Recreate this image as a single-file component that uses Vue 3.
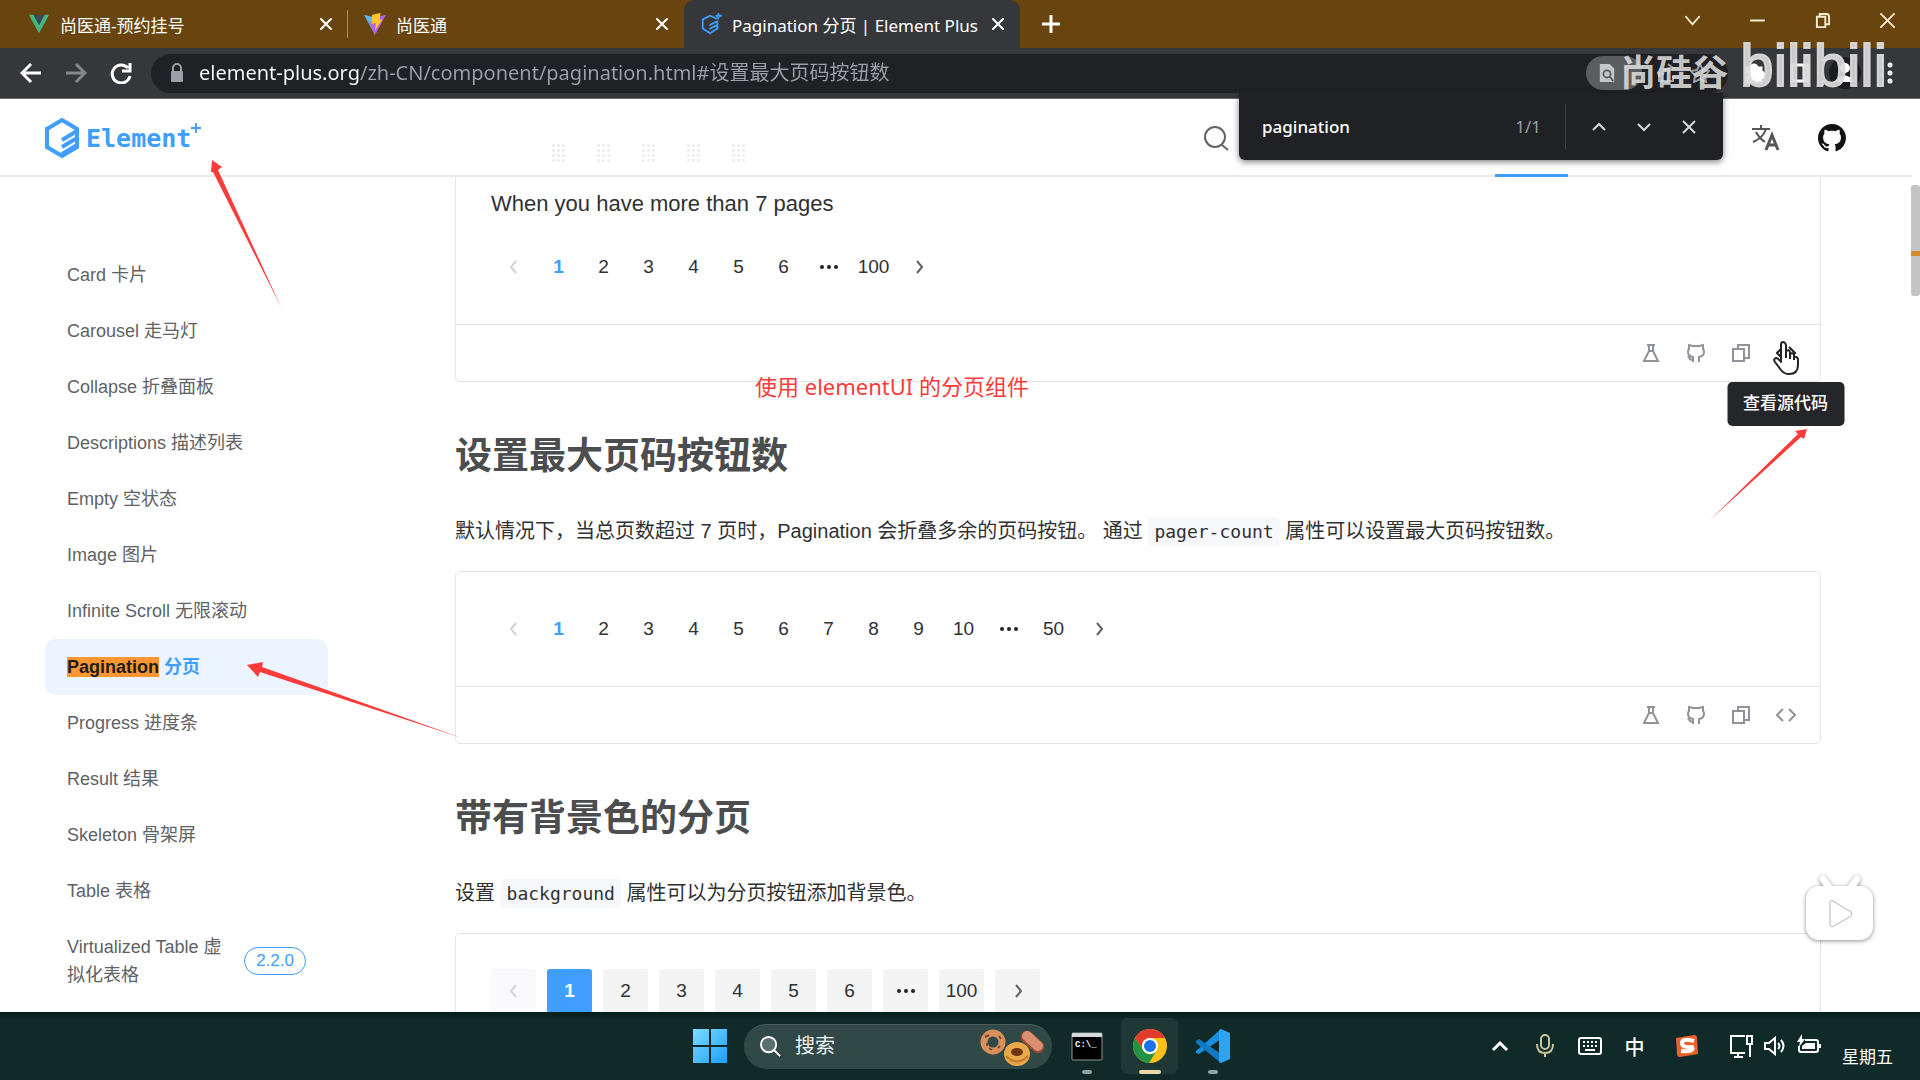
<template>
  <div class="desktop">
    <!-- 标签栏 -->
    <div class="tab-strip">
      <div v-for="tab in tabs" :key="tab.title" class="tab" :class="{ active: tab.active }">
        <svg v-if="tab.icon === 'vue'" class="tab-icon" viewBox="0 0 24 24">
          <path d="M1 2h5l6 11 6-11h5L12 22z" fill="#41b883" />
          <path d="M6 2h4l2 4 2-4h4l-6 11z" fill="#35495e" />
        </svg>
        <svg v-else-if="tab.icon === 'vite'" class="tab-icon" viewBox="0 0 24 24">
          <path d="M0 2l12 3v19z" fill="#5cb8f5" />
          <path d="M24 2L12 5 6 11l6 13z" fill="#b264e8" />
          <path d="M9 2l9-2-1 7h3l-8 12 1-8-5 1z" fill="#ffc628" />
        </svg>
        <svg v-else class="tab-icon" viewBox="0 0 24 24" fill="none" stroke="#409eff" stroke-width="2">
          <path d="M18 6l-7-3-8 4v10l8 5 8-5v-6M11 13l8-4M11 17l8-4M20 1v5M18 3h5" />
        </svg>
        <span class="tab-title">{{ tab.title }}</span>
        <button class="tab-close" aria-label="关闭标签页">
          <svg viewBox="0 0 16 16"><path d="M3 3l10 10M13 3L3 13" /></svg>
        </button>
      </div>
      <button class="new-tab" aria-label="新标签页">
        <svg viewBox="0 0 18 18"><path d="M9 1v16M1 9h16" /></svg>
      </button>
      <div class="window-controls">
        <button aria-label="搜索标签页"><svg viewBox="0 0 16 16"><path d="M1 4l7 8 7-8" /></svg></button>
        <button aria-label="最小化"><svg viewBox="0 0 16 16"><path d="M1 8h14" /></svg></button>
        <button aria-label="还原"><svg viewBox="0 0 16 16"><path d="M2 4h9v11H2zM5 4V1h7q3 0 3 3v8h-4" /></svg></button>
        <button aria-label="关闭"><svg viewBox="0 0 16 16"><path d="M1 1l14 14M15 1L1 15" /></svg></button>
      </div>
    </div>

    <!-- 地址栏 -->
    <div class="toolbar">
      <button class="tool" aria-label="后退">
        <svg viewBox="0 0 22 22"><path d="M21 11H2M11 2l-9 9 9 9" /></svg>
      </button>
      <button class="tool dim" aria-label="前进">
        <svg viewBox="0 0 22 22"><path d="M1 11h19M11 2l9 9-9 9" /></svg>
      </button>
      <button class="tool" aria-label="重新加载">
        <svg viewBox="0 0 22 22"><path d="M18 6a9 9 0 1 0 2 8M20 1v8h-8" /></svg>
      </button>
      <div class="address">
        <svg class="lock" viewBox="0 0 16 20">
          <rect x="2" y="8" width="12" height="11" rx="1" fill="#9aa0a6" />
          <path d="M4 8V5a4 4 0 0 1 8 0v3" fill="none" stroke="#9aa0a6" stroke-width="2" />
        </svg>
        <input class="url" type="text" aria-label="地址" value="element-plus.org/zh-CN/component/pagination.html#设置最大页码按钮数" />
        <span class="find-chip">
          <svg viewBox="0 0 20 22">
            <path d="M2 1h11l5 5v15H2z" fill="#c4c7c9" />
            <circle cx="10" cy="12" r="4" fill="none" stroke="#5b5d5f" stroke-width="2" />
            <path d="M13 15l4 5" stroke="#5b5d5f" stroke-width="2" />
          </svg>
        </span>
        <svg class="address-icon" viewBox="0 0 20 20"><path d="M3 9v9h14v-5M7 12q0-7 8-7M12 1l5 4-5 4" /></svg>
        <svg class="address-icon" viewBox="0 0 20 20"><path d="M10 1l3 6 6 1-4 5 1 6-6-3-6 3 1-6-4-5 6-1z" /></svg>
      </div>
      <button class="tool" aria-label="扩展程序">
        <svg viewBox="0 0 22 22"><path d="M3 6h4a3 3 0 0 1 6 0h4v4a3 3 0 0 1 0 6v4h-5a2 2 0 0 0-5 0H3v-5a2 2 0 0 0 0-5z" fill="#fff" /></svg>
      </button>
      <button class="tool" aria-label="侧边栏">
        <svg viewBox="0 0 22 22"><path d="M3 3h16v16H3zM15 3v16" /></svg>
      </button>
      <button class="tool avatar" aria-label="用户">
        <svg viewBox="0 0 32 32">
          <circle cx="16" cy="16" r="16" fill="#1b1c1f" stroke="none" />
          <circle cx="16" cy="11" r="5" fill="#fff" stroke="none" />
          <path d="M6 25q10-13 20 0z" fill="#fff" stroke="none" />
        </svg>
      </button>
      <button class="tool" aria-label="菜单">
        <svg viewBox="0 0 22 22" fill="#fff"><circle cx="11" cy="3" r="1" /><circle cx="11" cy="11" r="1" /><circle cx="11" cy="19" r="1" /></svg>
      </button>
    </div>

    <div class="page">
      <header class="site-header">
        <a class="logo" href="#" aria-label="Element Plus">
          <svg class="logo-mark" viewBox="0 0 36 40" fill="none" stroke="#409eff">
            <path d="M18 2l15 9v18l-15 9-15-9V11z" stroke-width="4" />
            <path d="M18 22l15-9M18 29l15-9M18 36l15-9" stroke-width="4" />
          </svg>
          <span>Element</span>
          <svg class="logo-plus" viewBox="0 0 10 10"><path d="M5 0v10M0 5h10" stroke="#409eff" stroke-width="2" /></svg>
        </a>
        <div class="faded-dots">
          <i v-for="n in 5" :key="n"></i>
        </div>
        <div class="header-tools">
          <button class="header-search" aria-label="搜索">
            <svg viewBox="0 0 26 26" fill="none" stroke="#606266" stroke-width="2"><circle cx="12" cy="12" r="10" /><path d="M19 20l6 5" /></svg>
          </button>
          <a class="current-link" href="#" aria-label="组件"></a>
          <button class="header-icon" aria-label="语言">
            <svg viewBox="0 0 28 28" fill="none" stroke="#555" stroke-width="2">
              <path d="M0 5h18M9 1v4M14 5Q11 14 1 18M4 8q3 6 9 10" />
              <path d="M14 26l6-15 6 15M16 21h8" stroke-width="3" />
            </svg>
          </button>
          <a class="header-icon" href="#" aria-label="GitHub">
            <svg viewBox="0 0 16 16" fill="#111">
              <path d="M8 0C3.58 0 0 3.58 0 8c0 3.54 2.29 6.53 5.47 7.59.4.07.55-.17.55-.38 0-.19-.01-.82-.01-1.49-2.01.37-2.53-.49-2.69-.94-.09-.23-.48-.94-.82-1.13-.28-.15-.68-.52-.01-.53.63-.01 1.08.58 1.23.82.72 1.21 1.87.87 2.33.66.07-.52.28-.87.51-1.07-1.78-.2-3.64-.89-3.64-3.95 0-.87.31-1.59.82-2.15-.08-.2-.36-1.02.08-2.12 0 0 .67-.21 2.2.82.64-.18 1.32-.27 2-.27s1.36.09 2 .27c1.53-1.04 2.2-.82 2.2-.82.44 1.1.16 1.92.08 2.12.51.56.82 1.27.82 2.15 0 3.07-1.87 3.75-3.65 3.95.29.25.54.73.54 1.48 0 1.07-.01 1.93-.01 2.2 0 .21.15.46.55.38A8.01 8.01 0 0 0 16 8c0-4.42-3.58-8-8-8z" />
            </svg>
          </a>
        </div>
      </header>

      <div class="page-body">
        <nav class="sidebar">
          <a v-for="item in menu" :key="item.en" href="#" class="menu-item" :class="{ active: item.active }">
            <span v-if="item.active" class="menu-text"><mark>{{ item.en }}</mark> {{ item.zh }}</span>
            <span v-else class="menu-text">{{ `${item.en} ${item.zh}` }}</span>
            <span v-if="item.version" class="version">{{ item.version }}</span>
          </a>
        </nav>

        <main class="content">
          <section v-for="demo in demos" :key="demo.id">
            <h2 v-if="demo.title">{{ demo.title }}</h2>
            <p v-if="demo.title" class="intro">
              {{ demo.before }} <code>{{ demo.code }}</code> {{ demo.after }}
            </p>
            <div class="example" :class="{ continued: !demo.title }">
              <div class="example-showcase">
                <div v-if="demo.caption" class="caption">{{ demo.caption }}</div>
                <div class="pagination" :class="{ background: demo.background }">
                  <button class="pager disabled" disabled aria-label="上一页">
                    <svg viewBox="0 0 14 14"><path d="M9 1L4 7l5 6" /></svg>
                  </button>
                  <button v-for="p in demo.pages" :key="p" class="pager" :class="{ current: p === 1 }" :aria-label="p === '…' ? '更多' : undefined">
                    <svg v-if="p === '…'" class="more" viewBox="0 0 20 6">
                      <circle cx="3" cy="3" r="2" /><circle cx="10" cy="3" r="2" /><circle cx="17" cy="3" r="2" />
                    </svg>
                    <template v-else>{{ p }}</template>
                  </button>
                  <button class="pager" aria-label="下一页">
                    <svg viewBox="0 0 14 14"><path d="M5 1l5 6-5 6" /></svg>
                  </button>
                </div>
              </div>
              <div class="op-btns">
                <button aria-label="在 Playground 中编辑">
                  <svg viewBox="0 0 20 20"><path d="M6 2h8M8 2v6L3 18h14L12 8V2M8 8h4" /></svg>
                </button>
                <button aria-label="在 Github 中编辑">
                  <svg viewBox="0 0 20 20"><path d="M7 19v-5q-5-1-5-5 0-2 1-3V2l4 1h6l4-1v4q1 1 1 3 0 4-5 5v5M7 17q-3 0-5-4" /></svg>
                </button>
                <button aria-label="复制代码">
                  <svg viewBox="0 0 20 20"><path d="M2 6h11v12H2zM7 6V2h11v13h-5" /></svg>
                </button>
                <button class="source" :class="{ hovered: demo.hovered }" aria-label="查看源代码">
                  <svg viewBox="0 0 20 20"><path d="M7 4l-6 6 6 6M13 4l6 6-6 6" /></svg>
                  <template v-if="demo.hovered">
                    <svg class="hand" viewBox="0 0 26 34">
                      <path d="M8 20V4q0-3 2-3t3 3v9-3q3-2 4 1v2q3-2 4 1v2q3-1 4 2v6q0 9-9 9-5 0-8-4l-6-8q-2-3 1-4 2 0 5 4z" fill="#fff" stroke="#222" stroke-width="2" stroke-linejoin="round" />
                      <path d="M13 12v5M17 13v5M21 15v4" stroke="#222" stroke-width="2" />
                    </svg>
                    <span class="tooltip">查看源代码</span>
                  </template>
                </button>
              </div>
            </div>
          </section>
        </main>

        <div class="scrollbar"><div class="thumb"><i></i></div></div>
      </div>
    </div>

    <!-- 任务栏 -->
    <footer class="taskbar">
      <div></div>
      <div class="taskbar-center">
        <button class="app" aria-label="开始">
          <svg class="app-icon" viewBox="0 0 34 34">
            <defs>
              <linearGradient id="win" x1="0" y1="0" x2="1" y2="1">
                <stop offset="0" stop-color="#7fdcff" />
                <stop offset="1" stop-color="#1a9fff" />
              </linearGradient>
            </defs>
            <path d="M0 0h16v16H0zM18 0h16v16H18zM0 18h16v16H0zM18 18h16v16H18z" fill="url(#win)" />
          </svg>
        </button>
        <label class="task-search">
          <svg class="search-glass" viewBox="0 0 22 22" fill="#5b706e" stroke="#fff" stroke-width="2"><circle cx="9" cy="9" r="8" /><path d="M15 15l6 6" /></svg>
          <input type="text" placeholder="搜索" aria-label="搜索" />
          <svg class="donuts" viewBox="0 0 66 38">
            <circle cx="13" cy="14" r="9" fill="none" stroke="#d9905a" stroke-width="7" />
            <path d="M5 9l4-2M9 20l3 2M19 8l2 3M18 20l2-2M7 15l0 3" stroke="#7b4a3a" stroke-width="2" />
            <g stroke-linecap="round"><path d="M47 9l11 10" stroke="#8f4a33" stroke-width="13" /><path d="M47 8l11 10" stroke="#d98f70" stroke-width="10" /></g>
            <ellipse cx="37" cy="26" rx="13" ry="12" fill="#e9a94b" />
            <ellipse cx="37" cy="24" rx="6" ry="4" fill="#6e3410" />
            <path d="M26 28q11 11 22 0" fill="none" stroke="#c67a25" stroke-width="2" />
          </svg>
        </label>
        <button class="app running" aria-label="命令提示符">
          <svg class="app-icon" viewBox="0 0 34 34">
            <rect x="2" y="4" width="30" height="27" rx="1" fill="#000" stroke="#8d9594" stroke-width="1" />
            <path d="M2 4h30v4H2z" fill="#d5d9d9" />
            <text x="5" y="18" font-size="9" font-weight="700" fill="#fff" font-family="Liberation Mono, monospace">C:\_</text>
          </svg>
        </button>
        <button class="app running focused" aria-label="Chrome">
          <svg class="app-icon" viewBox="0 0 34 34">
            <circle cx="17" cy="17" r="17" fill="#fbc116" />
            <path d="M2 9A17 17 0 0 1 32 9H17a8 8 0 0 0-7 12z" fill="#e33b2e" />
            <path d="M2 9a17 17 0 0 0 14 25l8-13a8 8 0 0 1-14 0z" fill="#229342" />
            <circle cx="17" cy="17" r="8" fill="#fff" />
            <circle cx="17" cy="17" r="6" fill="#1a73e8" />
          </svg>
        </button>
        <button class="app running" aria-label="Visual Studio Code">
          <svg class="app-icon" viewBox="0 0 34 34">
            <path d="M0 22l25-22v10L3 25l-3-1z" fill="#1b8ee0" />
            <path d="M0 12l3-2 22 15v9L0 14z" fill="#1079c4" />
            <path d="M25 0l9 4v26l-9 4-2-1V1z" fill="#2ba4f4" />
          </svg>
        </button>
      </div>
      <div class="tray">
        <button class="tray-btn" aria-label="显示隐藏的图标"><svg viewBox="0 0 24 24"><path d="M5 16l7-7 7 7" stroke-width="3" /></svg></button>
        <button class="tray-btn mic" aria-label="麦克风"><svg viewBox="0 0 24 24"><rect x="8" y="1" width="8" height="14" rx="4" /><path d="M4 10q0 9 8 9t8-9M12 19v4" /></svg></button>
        <button class="tray-btn" aria-label="触摸键盘"><svg viewBox="0 0 24 24"><rect x="1" y="4" width="22" height="16" rx="2" /><path d="M5 8h14M5 12h14" stroke-dasharray="2 2" /><path d="M7 16h10" /></svg></button>
        <button class="tray-btn ime">中</button>
        <button class="tray-btn sogou" aria-label="搜狗输入法">
          <svg viewBox="0 0 24 24">
            <path d="M1 4l18-3q3 0 3 3l1 16-18 3q-3 0-3-3z" fill="#e8622c" stroke="none" />
            <path d="M19 7Q7 4 7 9t10 4q3 5-11 4" stroke-width="4" />
          </svg>
        </button>
        <button class="tray-status" aria-label="网络、音量和电池">
          <svg viewBox="0 0 24 24"><path d="M16 2H2v17h14M9 19v4M5 23h9M21 10v13M21 10h-3V2h5v8z" /></svg>
          <svg viewBox="0 0 24 24"><path d="M2 9h4l6-5v16l-6-5H2zM15 9q3 3 0 6M18 6q5 6 0 12" /></svg>
          <svg viewBox="0 0 24 24"><path d="M8 6h11q2 0 2 2v8q0 2-2 2H4q-2 0-2-2v-4M23 10v4" /><path d="M9 9h9v6H5v-3zM5 0L0 8h3l-1 5 6-8H5z" fill="#fff" stroke="none" /></svg>
        </button>
        <span class="clock">星期五</span>
      </div>
    </footer>

    <!-- 页内查找 -->
    <div class="find-bar">
      <input type="text" value="pagination" aria-label="在页面中查找" />
      <span class="find-count">1/1</span>
      <div class="find-actions">
        <button aria-label="上一个"><svg viewBox="0 0 16 16"><path d="M2 11l6-6 6 6" /></svg></button>
        <button aria-label="下一个"><svg viewBox="0 0 16 16"><path d="M2 5l6 6 6-6" /></svg></button>
        <button aria-label="关闭查找栏"><svg viewBox="0 0 16 16"><path d="M2 2l12 12M14 2L2 14" /></svg></button>
      </div>
    </div>

    <!-- 视频水印 -->
    <div class="watermark">
      <span class="uploader">尚硅谷</span>
      <span class="site">bilibili</span>
    </div>
    <svg class="play-badge" viewBox="0 0 76 72">
      <path d="M21 5l7 10M55 5l-7 10" stroke="#fff" stroke-width="7" stroke-linecap="round" />
      <rect x="4" y="12" width="67" height="54" rx="13" fill="#fff" />
      <path d="M28 28q0-3 3-1l18 11q2 2 0 4L32 52q-4 2-4-2z" fill="#fff" stroke="#b5b5b5" stroke-width="1" />
    </svg>

    <!-- 红色标注 -->
    <svg class="arrows" fill="#fc3b3b">
      <path d="M212 160l10 7-4 3 63 137L213 172l-2 0z" />
      <path d="M247 665l16-3-1 5 200 71-202-66-2 5z" />
      <path d="M1807 429l-3 10-3-2-91 83 88-86-3-3z" />
    </svg>
    <div class="note">使用 elementUI 的分页组件</div>
  </div>
</template>

<script setup>
const tabs = [
  { title: '尚医通-预约挂号', icon: 'vue' },
  { title: '尚医通', icon: 'vite' },
  { title: 'Pagination 分页 | Element Plus', icon: 'element', active: true }
]

const menu = [
  { en: 'Card', zh: '卡片' },
  { en: 'Carousel', zh: '走马灯' },
  { en: 'Collapse', zh: '折叠面板' },
  { en: 'Descriptions', zh: '描述列表' },
  { en: 'Empty', zh: '空状态' },
  { en: 'Image', zh: '图片' },
  { en: 'Infinite Scroll', zh: '无限滚动' },
  { en: 'Pagination', zh: '分页', active: true },
  { en: 'Progress', zh: '进度条' },
  { en: 'Result', zh: '结果' },
  { en: 'Skeleton', zh: '骨架屏' },
  { en: 'Table', zh: '表格' },
  { en: 'Virtualized Table', zh: '虚拟化表格', version: '2.2.0' }
]

const demos = [
  {
    id: 'basic',
    caption: 'When you have more than 7 pages',
    pages: [1, 2, 3, 4, 5, 6, '…', 100],
    hovered: true
  },
  {
    id: 'pager-count',
    title: '设置最大页码按钮数',
    before: '默认情况下，当总页数超过 7 页时，Pagination 会折叠多余的页码按钮。 通过',
    code: 'pager-count',
    after: '属性可以设置最大页码按钮数。',
    pages: [1, 2, 3, 4, 5, 6, 7, 8, 9, 10, '…', 50]
  },
  {
    id: 'background',
    title: '带有背景色的分页',
    before: '设置',
    code: 'background',
    after: '属性可以为分页按钮添加背景色。',
    pages: [1, 2, 3, 4, 5, 6, '…', 100],
    background: true
  }
]
</script>

<style>
body {
  margin: 0;
  overflow: hidden;
}
</style>

<style scoped>
.desktop {
  position: relative;
  height: 100vh;
  display: flex;
  flex-direction: column;
  overflow: hidden;
  font-family: "Liberation Sans", "Noto Sans CJK SC", sans-serif;
  background: #fff;
}

button,
input {
  font: inherit;
  color: inherit;
  border: none;
  background: none;
  padding: 0;
  outline: none;
}

button {
  display: flex;
  align-items: center;
  justify-content: center;
}

a {
  text-decoration: none;
  color: inherit;
}

svg {
  display: block;
  flex-shrink: 0;
}

/* 标签栏 */
.tab-strip {
  flex: none;
  height: 48px;
  display: flex;
  padding-left: 12px;
  background: #68450e;
  color: #fff;
  font-family: "Noto Sans", "Noto Sans CJK SC", sans-serif;
  font-size: 17px;
}

.tab {
  width: 336px;
  box-sizing: border-box;
  display: flex;
  align-items: center;
  gap: 10px;
  padding: 0 14px 0 16px;
}

.tab:first-child {
  background: linear-gradient(#b08c55, #b08c55) right center / 1px 28px no-repeat;
}

.tab.active {
  background: #36373b;
  border-radius: 10px 10px 0 0;
}

.tab-icon {
  width: 22px;
  height: 22px;
}

.tab-title {
  flex: 1;
  min-width: 0;
  white-space: nowrap;
}

.tab-close svg {
  width: 16px;
  height: 16px;
}

.tab-strip svg path {
  stroke-linecap: round;
}

.tab-close path,
.new-tab path {
  stroke: #fff;
  stroke-width: 2;
}

.new-tab {
  width: 62px;
}

.new-tab path {
  stroke-width: 3;
}

.new-tab svg {
  width: 18px;
  height: 18px;
}

.window-controls {
  margin-left: auto;
  display: flex;
  height: 40px;
}

.window-controls button {
  width: 65px;
}

.window-controls svg {
  width: 15px;
  height: 15px;
  fill: none;
  stroke: #fdebd2;
  stroke-width: 2;
}

/* 地址栏 */
.toolbar {
  flex: none;
  height: 51px;
  box-sizing: border-box;
  display: flex;
  align-items: center;
  padding: 0 8px;
  background: #36373b;
  border-bottom: 1px solid #6a6b6d;
}

.tool {
  width: 45px;
  height: 40px;
}

.tool svg {
  width: 22px;
  height: 22px;
  fill: none;
  stroke: #fff;
  stroke-width: 3;
}

.tool.dim svg {
  stroke: #85878a;
}

.tool.avatar svg {
  width: 32px;
  height: 32px;
}

.address {
  flex: 1;
  height: 39px;
  display: flex;
  align-items: center;
  gap: 14px;
  margin: 0 4px 0 8px;
  padding: 0 18px;
  border-radius: 20px;
  background: #202124;
  color: #9aa0a6;
}

.lock {
  width: 16px;
  height: 20px;
}

.url {
  flex: 1;
  min-width: 0;
  font-family: "Noto Sans", "Noto Sans CJK SC", sans-serif;
  font-size: 20px;
  line-height: 30px;
  color: transparent;
  background: linear-gradient(90deg, #fff 161px, #9aa0a6 161px);
  background-clip: text;
}

.find-chip {
  width: 56px;
  height: 34px;
  box-sizing: border-box;
  padding: 7px 12px;
  border-radius: 17px;
  background: #5b5d5f;
}

.find-chip svg {
  width: 18px;
  height: 20px;
}

.address-icon {
  width: 20px;
  height: 20px;
  fill: none;
  stroke: #9aa0a6;
  stroke-width: 2;
}

/* 网站页头 */
.page {
  flex: 1;
  min-height: 0;
  display: flex;
  flex-direction: column;
}

.site-header {
  flex: none;
  height: 78px;
  box-sizing: border-box;
  display: flex;
  align-items: stretch;
  margin-right: 8px;
  padding: 2px 66px 0 44px;
  border-bottom: 2px solid #e9eaec;
}

.logo {
  display: flex;
  align-items: center;
  color: #409eff;
  font-family: "DejaVu Sans Mono", monospace;
  font-size: 25px;
  font-weight: 700;
}

.logo-mark {
  width: 36px;
  height: 40px;
  margin-right: 6px;
}

.logo-plus {
  width: 10px;
  height: 10px;
  margin-bottom: 20px;
}

.faded-dots {
  display: flex;
  align-items: flex-end;
  gap: 29px;
  margin-left: 350px;
  padding-bottom: 12px;
}

.faded-dots i {
  width: 16px;
  height: 20px;
  background: radial-gradient(circle, #ececee 1px, transparent 2px) 0 0 / 5px 5px;
}

.header-tools {
  margin-left: auto;
  display: flex;
  align-items: center;
}

.header-search {
  margin-right: 266px;
}

.header-search svg {
  width: 26px;
  height: 26px;
}

.current-link {
  width: 73px;
  align-self: stretch;
  margin-right: 184px;
  margin-bottom: -2px;
  border-bottom: 3px solid #409eff;
}

.header-icon {
  margin-left: 38px;
}

.current-link + .header-icon {
  margin-left: 0;
}

.header-icon svg {
  width: 28px;
  height: 28px;
}

/* 侧边菜单 */
.page-body {
  flex: 1;
  min-height: 0;
  display: flex;
  overflow: hidden;
}

.sidebar {
  flex: none;
  width: 283px;
  padding: 70px 127px 0 45px;
}

.menu-item {
  display: flex;
  align-items: center;
  justify-content: space-between;
  padding: 14px 22px;
  border-radius: 10px;
  color: #606266;
  font-size: 18px;
  line-height: 28px;
}

.menu-item.active {
  background: #ecf5ff;
  color: #409eff;
  font-weight: 700;
}

.menu-item mark {
  background: #fe9632;
  color: #1c1c1c;
}

.version {
  margin-left: 8px;
  padding: 0 11px;
  border: 1px solid #409eff;
  border-radius: 14px;
  line-height: 26px;
  color: #409eff;
  font-size: 17px;
}

/* 正文 */
.content {
  flex: 1;
  min-width: 0;
  padding-right: 90px;
}

h2 {
  margin: 51px 0 34px;
  color: #4c4d4f;
  font-size: 37px;
  font-weight: 700;
  line-height: 48px;
}

.intro {
  margin: 0 0 23px;
  color: #303133;
  font-size: 20px;
  line-height: 32px;
}

.intro code {
  padding: 4px 6px;
  border-radius: 4px;
  background: #f7f8fb;
  font-family: "DejaVu Sans Mono", monospace;
  font-size: 18px;
}

.example {
  border: 1px solid #e4e5e9;
  border-radius: 5px;
}

.example.continued {
  border-top: none;
  border-radius: 0 0 5px 5px;
}

.example-showcase {
  padding: 35px;
}

.continued .example-showcase {
  padding-top: 12px;
}

.caption {
  margin-bottom: 26px;
  color: #303133;
  font-size: 22px;
  line-height: 30px;
}

.pagination {
  display: flex;
  color: #303133;
  font-size: 19px;
}

.pager {
  min-width: 45px;
  height: 44px;
}

.pager svg {
  width: 14px;
  height: 14px;
  fill: none;
  stroke: #606266;
  stroke-width: 2;
}

.pager .more {
  width: 20px;
  height: 6px;
  fill: #222;
  stroke: none;
}

.pager.current {
  color: #409eff;
  font-weight: 700;
}

.pager.disabled svg {
  stroke: #d0d3d9;
}

.pagination.background {
  gap: 11px;
}

.background .pager {
  border-radius: 3px;
  background: #f4f4f5;
}

.background .pager.disabled {
  background: #fafafc;
}

.background .pager.current {
  background: #409eff;
  color: #fff;
}

.op-btns {
  height: 56px;
  display: flex;
  align-items: center;
  justify-content: flex-end;
  padding-right: 12px;
  border-top: 1px solid #e4e5e9;
}

.op-btns button {
  position: relative;
  width: 45px;
  height: 40px;
}

.op-btns svg {
  width: 20px;
  height: 20px;
  fill: none;
  stroke: #909399;
  stroke-width: 2;
}

.op-btns .hovered svg {
  stroke: #222;
}

.op-btns .hand {
  position: absolute;
  left: 10px;
  top: 8px;
  width: 26px;
  height: 34px;
}

.tooltip {
  position: absolute;
  top: 49px;
  left: 50%;
  transform: translateX(-50%);
  z-index: 2;
  padding: 0 16px;
  border-radius: 5px;
  background: #252629;
  color: #fff;
  font-size: 17px;
  font-weight: 500;
  line-height: 44px;
  white-space: nowrap;
}

.scrollbar {
  flex: none;
  width: 9px;
  padding-top: 8px;
}

.thumb {
  height: 111px;
  padding-top: 66px;
  box-sizing: border-box;
  border-radius: 3px;
  background: #c4c4c6;
}

.thumb i {
  display: block;
  height: 5px;
  background: #d58a2a;
}

/* 任务栏 */
.taskbar {
  position: relative;
  flex: none;
  height: 68px;
  box-sizing: border-box;
  display: grid;
  grid-template-columns: 1fr auto 1fr;
  align-items: center;
  padding-left: 2px;
  background: linear-gradient(#071d1a, #0f2a28 8px);
  color: #fff;
}

.taskbar-center {
  display: flex;
  align-items: center;
  gap: 6px;
}

.app {
  position: relative;
  width: 57px;
  height: 56px;
  border-radius: 6px;
}

.app-icon {
  width: 34px;
  height: 34px;
}

.app.focused {
  background: #1f3836;
}

.running::after {
  content: "";
  position: absolute;
  bottom: 0;
  width: 10px;
  height: 4px;
  border-radius: 2px;
  background: #8ca3a1;
}

.focused::after {
  width: 22px;
  background: #e8d9a6;
}

.task-search {
  width: 308px;
  height: 45px;
  box-sizing: border-box;
  display: flex;
  align-items: center;
  padding: 0 6px 0 16px;
  border-radius: 23px;
  border-top: 1px solid #4a5f5d;
  background: #304846;
}

.search-glass {
  width: 21px;
  height: 21px;
}

.task-search input {
  flex: 1;
  min-width: 0;
  margin-left: 14px;
  font-size: 20px;
}

.task-search input::placeholder {
  color: #eef2f2;
}

.donuts {
  width: 66px;
  height: 38px;
}

.tray {
  display: flex;
  align-items: center;
  justify-content: flex-end;
  padding-right: 27px;
  font-size: 20px;
}

.tray svg {
  width: 24px;
  height: 24px;
  fill: none;
  stroke: #fff;
  stroke-width: 2;
}

.tray-btn {
  width: 45px;
  height: 45px;
}

.tray .mic svg {
  stroke: #c9c79a;
}

.ime {
  font-weight: 500;
}

.sogou {
  width: 60px;
}

.tray-status {
  gap: 10px;
  margin: 0 21px 0 12px;
}

.clock {
  padding-top: 18px;
  font-size: 17px;
}

/* 页内查找 */
.find-bar {
  position: absolute;
  top: 93px;
  right: 197px;
  width: 484px;
  height: 67px;
  box-sizing: border-box;
  display: flex;
  align-items: center;
  padding: 0 12px 0 23px;
  border-radius: 0 0 6px 6px;
  background: #202124;
  box-shadow: 0 2px 6px rgba(0, 0, 0, 0.5);
  color: #fff;
  font-family: "Noto Sans", sans-serif;
  font-size: 17px;
  font-weight: 500;
}

.find-bar input {
  flex: 1;
  min-width: 0;
}

.find-count {
  margin-right: 24px;
  color: #9aa0a6;
  font-weight: 400;
}

.find-actions {
  display: flex;
  padding-left: 10px;
  border-left: 1px solid #3f4043;
}

.find-actions button {
  width: 45px;
  height: 45px;
}

.find-actions svg {
  width: 16px;
  height: 16px;
  fill: none;
  stroke: #d5d7d9;
  stroke-width: 2;
}

/* 水印 */
.watermark {
  position: absolute;
  top: 34px;
  right: 33px;
  height: 64px;
  display: flex;
  align-items: center;
  gap: 12px;
  color: rgba(220, 220, 220, 0.9);
  pointer-events: none;
}

.uploader {
  padding-top: 8px;
  font-size: 36px;
  font-weight: 700;
}

.site {
  font-size: 60px;
  line-height: 64px;
  -webkit-text-stroke: 2px rgba(220, 220, 220, 0.9);
}

.play-badge {
  position: absolute;
  right: 42px;
  bottom: 134px;
  width: 76px;
  height: 72px;
  filter: drop-shadow(0 1px 2px rgba(0, 0, 0, 0.45));
}

/* 标注 */
.arrows {
  position: absolute;
  top: 0;
  left: 0;
  width: 100%;
  height: 100%;
  pointer-events: none;
}

.note {
  position: absolute;
  top: 370px;
  left: 755px;
  color: #fc3b3b;
  font-family: "Noto Sans", "Noto Sans CJK SC", sans-serif;
  font-size: 22px;
  line-height: 32px;
}
</style>
